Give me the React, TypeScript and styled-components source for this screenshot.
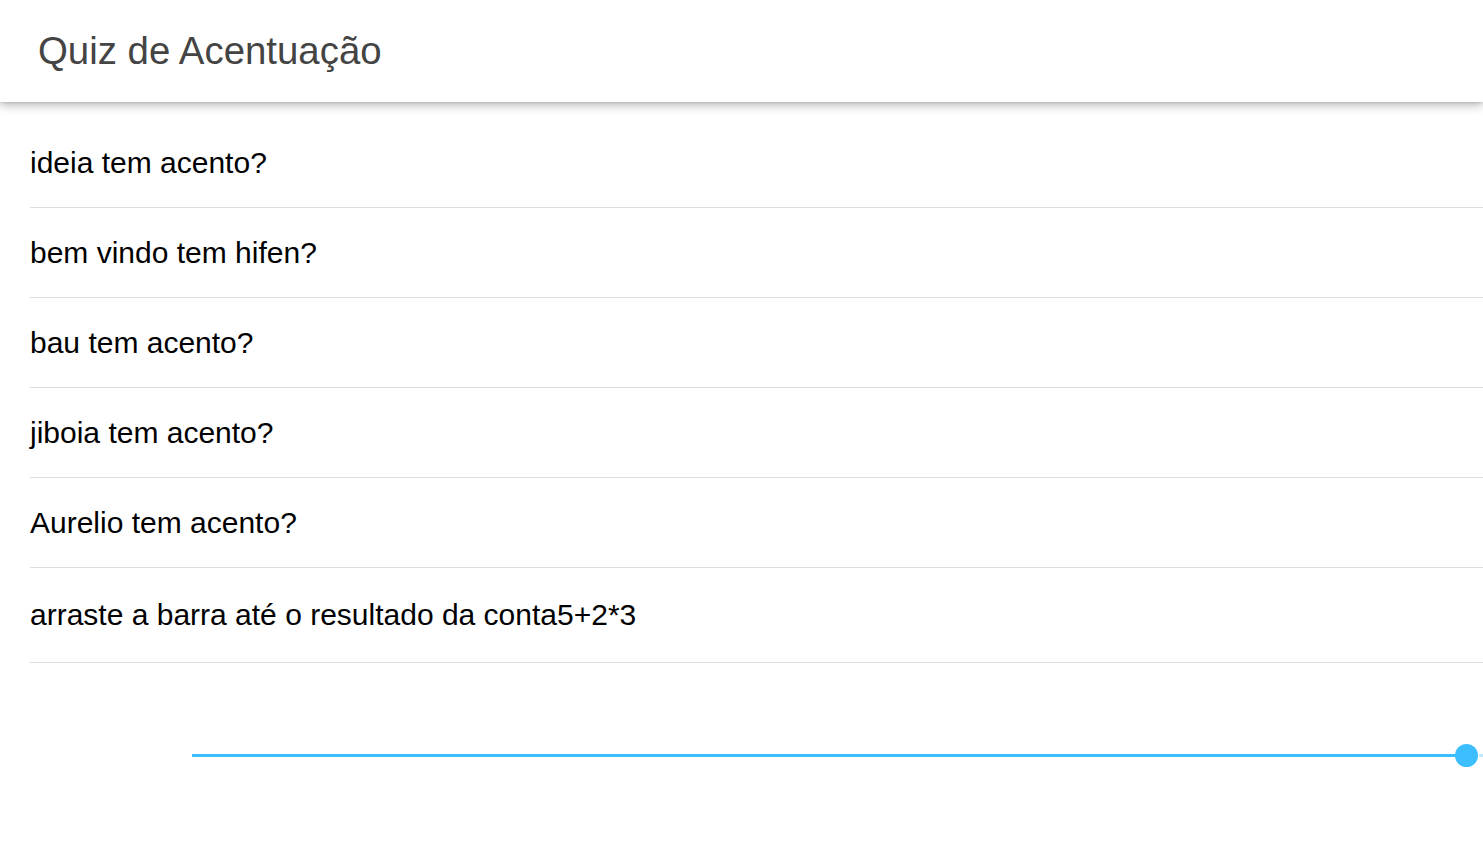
import styled, { createGlobalStyle } from "styled-components";

const questions = [
  { text: "ideia tem acento?" },
  { text: "bem vindo tem hifen?" },
  { text: "bau tem acento?" },
  { text: "jiboia tem acento?" },
  { text: "Aurelio tem acento?" },
  { text: "arraste a barra até o resultado da conta5+2*3", tall: true },
];

export default function App() {
  const value = 100;

  return (
    <>
      <GlobalStyle />
      <Page>
        <Header>
          <Title>Quiz de Acentuação</Title>
        </Header>

        <QuestionList>
          {questions.map((q) => (
            <QuestionRow key={q.text} $tall={q.tall}>
              {q.text}
            </QuestionRow>
          ))}
        </QuestionList>

        <SliderArea>
          <Track>
            <Fill style={{ width: `${value}%` }} />
            <Thumb />
          </Track>
          <Rest />
        </SliderArea>
      </Page>
    </>
  );
}

const GlobalStyle = createGlobalStyle`
  html, body {
    margin: 0;
    padding: 0;
    background: #fff;
    font-family: "Liberation Sans", Arial, sans-serif;
  }
`;

const Page = styled.div`
  width: 100%;
  min-height: 860px;
  overflow: hidden;
`;

const Header = styled.header`
  position: relative;
  z-index: 1;
  height: 102px;
  display: flex;
  align-items: center;
  padding-left: 38px;
  background: #fff;
  box-shadow: 0 3px 10px rgba(0, 0, 0, 0.28), 0 1px 3px rgba(0, 0, 0, 0.12);
`;

const Title = styled.h1`
  margin: 0;
  font-size: 38.4px;
  font-weight: 400;
  color: #444;
`;

const QuestionList = styled.ul`
  list-style: none;
  margin: 16px 0 0 30px;
  padding: 0;
`;

const QuestionRow = styled.li<{ $tall?: boolean }>`
  height: ${({ $tall }) => ($tall ? 94 : 89)}px;
  display: flex;
  align-items: center;
  border-bottom: 1px solid #dedede;
  font-size: 30px;
  color: #000;
`;

const SliderArea = styled.div`
  display: flex;
  align-items: center;
  height: 24px;
  margin-top: 80px;
  padding-left: 192px;
`;

const Track = styled.div`
  position: relative;
  flex: 1;
  height: 3px;
  margin-right: 12px;
`;

const Fill = styled.div`
  height: 100%;
  background: #3dbfff;
`;

const Thumb = styled.span`
  position: absolute;
  right: -11px;
  top: 50%;
  width: 23px;
  height: 23px;
  margin-top: -11px;
  border-radius: 50%;
  background: #3dbfff;
`;

const Rest = styled.div`
  width: 4px;
  height: 3px;
  background: #bfe9ff;
`;
